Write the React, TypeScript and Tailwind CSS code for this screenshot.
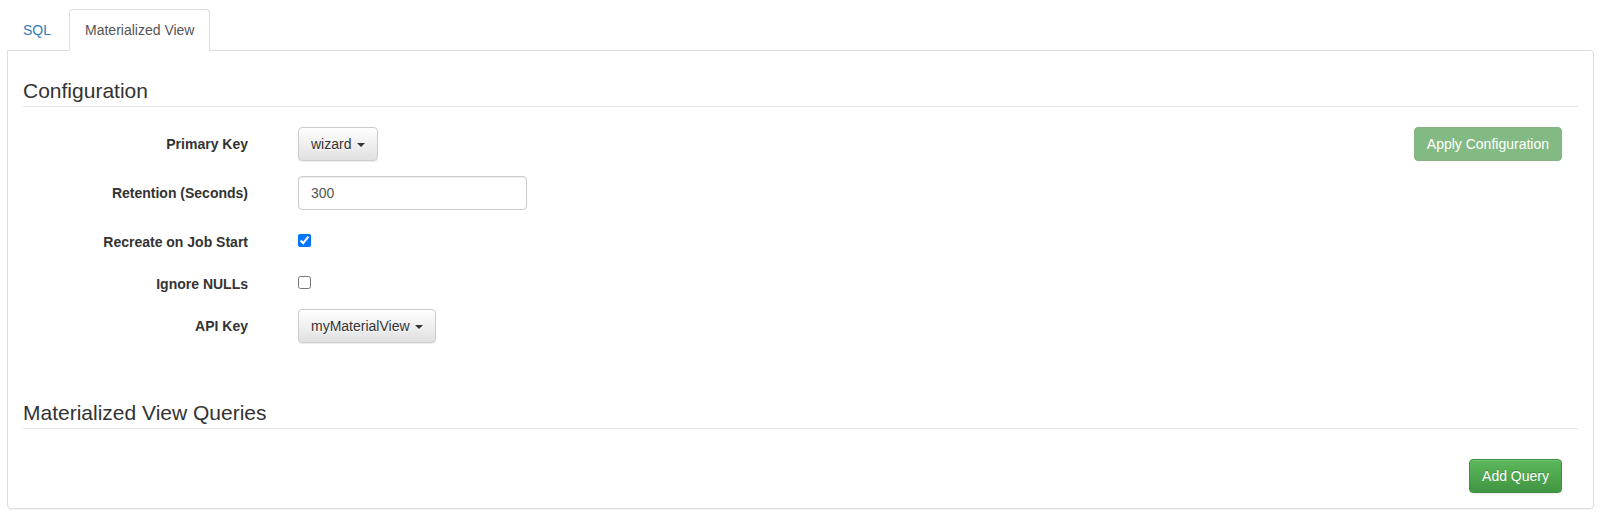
import React from 'react';

const Caret: React.FC = () => (
  <span className="inline-block w-0 h-0 ml-[2px] align-middle border-t-4 border-x-4 border-x-transparent border-t-[#333]" />
);

const DropButton: React.FC<{ label: string }> = ({ label }) => (
  <button
    type="button"
    className="h-[34px] px-[12px] rounded border border-[#ccc] bg-[linear-gradient(to_bottom,#fff_0,#e0e0e0_100%)] text-[14px] leading-5 text-[#333] [text-shadow:0_1px_0_#fff] shadow-[inset_0_1px_0_rgba(255,255,255,0.15),0_1px_1px_rgba(0,0,0,0.075)]"
  >
    {label} <Caret />
  </button>
);

const Label: React.FC<{ children: React.ReactNode }> = ({ children }) => (
  <label className="w-[225px] shrink-0 pt-[7px] text-right font-bold text-[14px] leading-5 text-[#333]">
    {children}
  </label>
);

const Legend: React.FC<{ children: React.ReactNode }> = ({ children }) => (
  <div className="text-[21px] leading-[30px] text-[#333] border-b border-[#e5e5e5]">{children}</div>
);

const App: React.FC = () => {
  return (
    <div
      className="min-h-[519px] bg-white pt-[9px] pl-[7px] pr-[12px] text-[14px] leading-5 text-[#333]"
      style={{ fontFamily: '"Liberation Sans", Arial, sans-serif' }}
    >
      {/* tabs */}
      <div className="flex">
        <a className="-mb-px mr-[2px] px-[15px] py-[10px] border border-transparent text-[#337ab7] leading-5">SQL</a>
        <a className="relative -mb-px px-[15px] py-[10px] border border-[#ddd] border-b-transparent rounded-t bg-white text-[#555] leading-5">
          Materialized View
        </a>
      </div>

      <div className="border border-[#ddd] rounded-b rounded-tr px-[15px] pt-[25px] pb-[15px] shadow-[0_1px_1px_rgba(0,0,0,0.05)]">
        <Legend>Configuration</Legend>

        <div className="flex flex-col mt-[20px]">
          <div className="flex mb-[15px]">
            <Label>Primary Key</Label>
            <div className="ml-[50px]">
              <DropButton label="wizard" />
            </div>
            <div className="flex-1" />
            <button
              type="button"
              disabled
              className="mr-[16px] h-[34px] px-[12px] rounded border border-[#3e8f3e] bg-[#419641] opacity-[0.65] text-white text-[14px] leading-5"
            >
              Apply Configuration
            </button>
          </div>

          <div className="flex mb-[15px]">
            <Label>Retention (Seconds)</Label>
            <div className="ml-[50px]">
              <input
                type="text"
                defaultValue="300"
                className="w-[229px] h-[34px] px-[12px] rounded border border-[#ccc] text-[#555] text-[14px] shadow-[inset_0_1px_1px_rgba(0,0,0,0.075)] outline-none"
              />
            </div>
          </div>

          <div className="flex h-[27px] mb-[15px]">
            <Label>Recreate on Job Start</Label>
            <div className="ml-[50px] pt-[9px]">
              <input type="checkbox" defaultChecked className="block w-[13px] h-[13px] m-0" />
            </div>
          </div>

          <div className="flex h-[27px] mb-[15px]">
            <Label>Ignore NULLs</Label>
            <div className="ml-[50px] pt-[9px]">
              <input type="checkbox" className="block w-[13px] h-[13px] m-0" />
            </div>
          </div>

          <div className="flex mb-[15px]">
            <Label>API Key</Label>
            <div className="ml-[50px]">
              <DropButton label="myMaterialView" />
            </div>
          </div>
        </div>

        <div className="mt-[40px]">
          <Legend>Materialized View Queries</Legend>
          <div className="flex justify-end mt-[30px]">
            <button
              type="button"
              className="mr-[16px] h-[34px] px-[12px] rounded border border-[#3e8f3e] bg-[linear-gradient(to_bottom,#5cb85c_0,#419641_100%)] text-white text-[14px] leading-5 [text-shadow:0_-1px_0_rgba(0,0,0,0.2)] shadow-[inset_0_1px_0_rgba(255,255,255,0.15),0_1px_1px_rgba(0,0,0,0.075)]"
            >
              Add Query
            </button>
          </div>
        </div>
      </div>
    </div>
  );
};

export default App;
